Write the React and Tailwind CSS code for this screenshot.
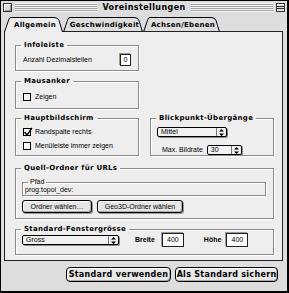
import React from 'react';

// fonts: chunky bold for titles (Charcoal stand-in), small sans for the rest
const body = "font-['Liberation_Sans',Arial,sans-serif] text-[7px] leading-[8px] text-black";
const chunk = "font-['DejaVu_Sans',sans-serif] font-bold text-[7px] leading-[8px] tracking-[0.3px] text-black";

const Arrows = () => (
  <svg width="5" height="7" viewBox="0 0 5 7">
    <path d="M2.5 0 L5 2.5 H0Z M0 4.5 H5 L2.5 7Z" fill="#000" />
  </svg>
);

const Popup = ({ label, className }) => (
  <div className={`flex h-[10px] items-stretch rounded-[2px] border border-black bg-[#f2f2f2] shadow-[1px_1px_0_#8a8a8a] ${className}`}>
    <span className={`flex-1 pl-[3px] ${body}`}>{label}</span>
    <span className="flex w-[10px] items-center justify-center border-l border-[#777]">
      <Arrows />
    </span>
  </div>
);

const Check = ({ checked, label }) => (
  <div className="flex h-[8px] items-center gap-[4px]">
    <span className="relative h-[8px] w-[8px] border border-black bg-[#f4f4f4] shadow-[inset_1px_1px_0_#fff]">
      {checked && (
        <svg className="absolute -left-px -top-[2px]" width="10" height="10" viewBox="0 0 10 10">
          <path d="M1.5 5 L4 8 L9 1" fill="none" stroke="#000" strokeWidth="1.4" />
        </svg>
      )}
    </span>
    <span className={body}>{label}</span>
  </div>
);

const Group = ({ title, className, children }) => (
  <fieldset className={`border border-[#8c8c8c] shadow-[inset_1px_1px_0_#fff,1px_1px_0_#fff] ${className}`}>
    <legend className={`ml-[5px] px-[3px] ${chunk}`}>{title}</legend>
    {children}
  </fieldset>
);

const Field = ({ value, className }) => (
  <span className={`flex items-center justify-center border border-[#222] bg-white shadow-[-1px_-1px_0_#999] ${body} ${className}`}>
    {value}
  </span>
);

const SmallButton = ({ label, className }) => (
  <button className={`h-[13px] rounded-[3px] border border-black bg-[#e6e6e6] shadow-[inset_1px_1px_0_#fff,inset_-1px_-1px_0_#aaa,1px_1px_0_#999] ${body} ${className}`}>
    {label}
  </button>
);

const BigButton = ({ label, className }) => (
  <button className={`h-[15px] rounded-[4px] border border-black bg-[#e8e8e8] shadow-[inset_1px_1px_0_#fff,inset_-1px_-1px_0_#aaa] ${chunk} text-[8px] tracking-[0.2px] ${className}`}>
    {label}
  </button>
);

const Tab = ({ label, width, selected }) => {
  const w = width;
  return (
    <div className={`relative flex h-[15px] items-center justify-center ${selected ? 'z-10' : ''}`} style={{ width: w }}>
      <svg className="absolute inset-0" width={w} height="15" viewBox={`0 0 ${w} 15`}>
        <path
          d={`M0.5 15 L5 2 Q5.5 0.5 7 0.5 L${w - 9} 0.5 Q${w - 5} 0.5 ${w - 4} 3.5 L${w - 0.5} 15`}
          fill={selected ? '#eeeeee' : '#dedede'}
          stroke="#000"
        />
      </svg>
      <span className={`relative pl-[3px] ${chunk}`}>{label}</span>
    </div>
  );
};

export default function App() {
  return (
    <div className="h-[293px] w-[289px] border-l border-t border-r-2 border-b-2 border-black bg-[#dddddd]">
      {/* title bar */}
      <div className="mx-[2px] mt-px flex h-[11px] items-center gap-[3px]">
        <span className="h-[9px] w-[9px] border border-[#333] bg-[#ddd] shadow-[inset_1px_1px_0_#fff,inset_-1px_-1px_0_#999]" />
        <div className="flex h-[9px] flex-1 items-center justify-center bg-[repeating-linear-gradient(to_bottom,#f6f6f6_0,#f6f6f6_1px,#a2a2a2_1px,#a2a2a2_2px)]">
          <span className={`bg-[#dddddd] px-[5px] ${chunk} text-[8px] leading-[9px] tracking-[0.4px]`}>Voreinstellungen</span>
        </div>
        <span className="flex h-[9px] w-[9px] flex-col justify-center border border-[#333] bg-[#ddd] shadow-[inset_1px_1px_0_#fff]">
          <span className="h-[3px] border-y border-[#333]" />
        </span>
      </div>

      {/* tabs */}
      <div className="relative ml-[3px] mt-[4px] -mb-px flex h-[15px]">
        <Tab label="Allgemein" width={59} selected />
        <Tab label="Geschwindigkeit" width={80} />
        <Tab label="Achsen/Ebenen" width={77} />
      </div>

      {/* panel */}
      <div className="relative z-[5] ml-[3px] h-[230px] w-[279px] border border-[#222] bg-[#eeeeee] pl-[10px] pt-[9px]">
        <Group title="Infoleiste" className="h-[30px] w-[124px]">
          <div className="mt-[5px] flex h-[12px] items-center justify-between pl-[7px] pr-[7px]">
            <span className={body}>Anzahl Dezimalstellen</span>
            <Field value="0" className="h-[12px] w-[11px]" />
          </div>
        </Group>

        <Group title="Mausanker" className="mt-[6px] h-[32px] w-[124px]">
          <div className="mt-[8px] pl-[7px]">
            <Check label="Zeigen" />
          </div>
        </Group>

        <div className="mt-[5px] flex gap-[11px]">
          <Group title="Hauptbildschirm" className="h-[42px] w-[124px]">
            <div className="mt-[6px] flex flex-col gap-[6px] pl-[7px]">
              <Check checked label="Randspalte rechts" />
              <Check label="Menüleiste immer zeigen" />
            </div>
          </Group>
          <Group title="Blickpunkt-Übergänge" className="h-[42px] w-[124px]">
            <div className="mt-[5px] pl-[6px]">
              <Popup label="Mittel" className="w-[70px]" />
            </div>
            <div className="mt-[8px] flex items-center gap-[4px] pl-[11px]">
              <span className={body}>Max. Bildrate</span>
              <Popup label="30" className="w-[35px]" />
            </div>
          </Group>
        </div>

        <Group title="Quell-Ordner für URLs" className="mt-[8px] h-[55px] w-[259px]">
          <fieldset className="ml-[6px] mt-[6px] h-[18px] w-[244px] border border-[#8c8c8c] shadow-[inset_1px_1px_0_#fff,1px_1px_0_#fff]">
            <legend className={`ml-[5px] px-[2px] ${body}`}>Pfad</legend>
            <div className={`pl-[2px] ${body}`}>prog:topoi_dev:</div>
          </fieldset>
          <div className="ml-[6px] mt-[4px] flex gap-[5px]">
            <SmallButton label="Ordner wählen…" className="w-[70px]" />
            <SmallButton label="Geo3D-Ordner wählen" className="w-[86px]" />
          </div>
        </Group>

        <Group title="Standard-Fenstergrösse" className="mt-[6px] h-[30px] w-[259px]">
          <div className="flex h-[14px] items-center pl-[6px]">
            <Popup label="Gross" className="w-[97px]" />
            <span className={`ml-[16px] font-bold ${body}`}>Breite</span>
            <Field value="400" className="ml-[7px] h-[14px] w-[22px]" />
            <span className={`ml-[20px] font-bold ${body}`}>Höhe</span>
            <Field value="400" className="ml-[5px] h-[14px] w-[22px]" />
          </div>
        </Group>
      </div>

      {/* bottom buttons */}
      <div className="mt-[6px] flex justify-end gap-[4px] pr-[9px]">
        <BigButton label="Standard verwenden" className="w-[105px]" />
        <BigButton label="Als Standard sichern" className="w-[103px]" />
      </div>
    </div>
  );
}
